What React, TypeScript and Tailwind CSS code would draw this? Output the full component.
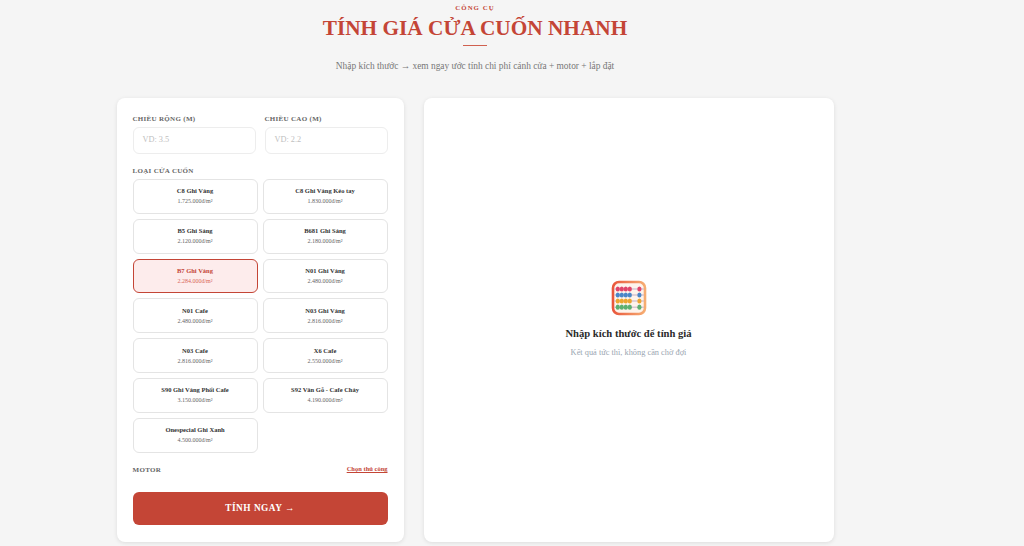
const doors: [string, string][] = [
  ["C8 Ghi Vàng", "1.725.000đ/m²"],
  ["C8 Ghi Vàng Kéo tay", "1.830.000đ/m²"],
  ["B5 Ghi Sáng", "2.120.000đ/m²"],
  ["B681 Ghi Sáng", "2.180.000đ/m²"],
  ["B7 Ghi Vàng", "2.284.000đ/m²"],
  ["N01 Ghi Vàng", "2.480.000đ/m²"],
  ["N01 Cafe", "2.480.000đ/m²"],
  ["N03 Ghi Vàng", "2.816.000đ/m²"],
  ["N03 Cafe", "2.816.000đ/m²"],
  ["X6 Cafe", "2.550.000đ/m²"],
  ["S90 Ghi Vàng Phối Cafe", "3.150.000đ/m²"],
  ["S92 Vân Gỗ - Cafe Cháy", "4.190.000đ/m²"],
  ["Onespecial Ghi Xanh", "4.500.000đ/m²"],
];

function Abacus() {
  const rows = [
    { y: 9, c: "#e0446a" },
    { y: 15, c: "#4a86c8" },
    { y: 21, c: "#eda52f" },
    { y: 27.2, c: "#5cb070" },
  ];
  return (
    <svg width="36" height="36" viewBox="0 0 36 36" aria-hidden="true">
      <defs>
        <linearGradient id="frame" x1="0" y1="0" x2="1" y2="0">
          <stop offset="0" stopColor="#e9573c" />
          <stop offset="1" stopColor="#f6ad72" />
        </linearGradient>
      </defs>
      <rect x="2" y="2" width="32" height="32" rx="6" fill="#fdf3ec" stroke="url(#frame)" strokeWidth="2.6" />
      {rows.map((r) => (
        <g key={r.y}>
          <rect x="3" y={r.y - 0.6} width="30" height="1.2" fill="#cdbccb" />
          {[6.8, 10.8, 14.8, 18.8, 28.4].map((x) => (
            <ellipse key={x} cx={x} cy={r.y} rx="2.1" ry="2.6" fill={r.c} />
          ))}
        </g>
      ))}
    </svg>
  );
}

export default function App() {
  return (
    <div className="h-[546px] overflow-hidden bg-[#f5f5f5] font-['Liberation_Serif',serif]">
      <div className="w-[950px] flex flex-col items-center">
        <p className="mt-[3px] text-[6.8px] leading-[9px] font-bold tracking-[1.05px] text-[#c44536]">CÔNG CỤ</p>
        <h1 className="mt-[3px] text-[21.3px] leading-[27px] font-bold text-[#c44536]">TÍNH GIÁ CỬA CUỐN NHANH</h1>
        <div className="mt-[3px] w-6 h-[1px] bg-[#d0604f]" />
        <p className="mt-[14px] text-[9.4px] leading-[12px] text-[#777777]">
          Nhập kích thước → xem ngay ước tính chi phí cánh cửa + motor + lắp đặt
        </p>

        <div className="mt-[26px] w-[717px] flex gap-5 items-stretch">
          <div className="w-[287px] h-[444px] shrink-0 bg-white rounded-lg shadow-[0_1px_4px_rgba(0,0,0,0.1)] px-4 pt-4">
            <div className="flex gap-[9px]">
              {[["CHIỀU RỘNG (M)", "VD: 3.5"], ["CHIỀU CAO (M)", "VD: 2.2"]].map(([label, ph]) => (
                <div key={label} className="w-[123px]">
                  <p className="text-[7px] leading-[10px] font-bold tracking-[0.3px] text-[#666666]">{label}</p>
                  <div className="mt-[3px] h-[27px] border border-[#ededed] rounded-md px-[9px] flex items-center text-[8.3px] text-[#c0c0c0]">
                    {ph}
                  </div>
                </div>
              ))}
            </div>
            <p className="mt-[12px] text-[7px] leading-[10px] font-bold tracking-[0.3px] text-[#666666]">LOẠI CỬA CUỐN</p>
            <div className="mt-[3px] grid grid-cols-2 gap-x-[5px] gap-y-[5px] w-[255px]">
              {doors.map(([name, price], i) => {
                const active = i === 4;
                return (
                  <div
                    key={name}
                    className={
                      active
                        ? "h-[34.8px] rounded-md border-[1.5px] border-[#c44536] bg-[#fdecec] flex flex-col items-center justify-center pb-[1px]"
                        : "h-[34.8px] rounded-md border-[1.5px] border-[#e4e4e4] bg-white flex flex-col items-center justify-center pb-[1px]"
                    }
                  >
                    <p className={active ? "text-[6.5px] leading-[9px] font-bold text-[#c44536]" : "text-[6.5px] leading-[9px] font-bold text-[#333333]"}>{name}</p>
                    <p className={active ? "mt-[2px] text-[6px] leading-[8px] text-[#d9675a]" : "mt-[2px] text-[6px] leading-[8px] text-[#666666]"}>{price}</p>
                  </div>
                );
              })}
            </div>
            <div className="mt-[11.4px] w-[255px] flex items-center justify-between">
              <span className="text-[7px] leading-[10px] font-bold tracking-[0.3px] text-[#666666]">MOTOR</span>
              <span className="mb-[3px] text-[6.5px] leading-[10px] font-bold underline text-[#c44536]">Chọn thủ công</span>
            </div>
            <div className="mt-[15px] w-[255px] h-[33px] pt-[1px] rounded-md bg-[#c44536] flex items-center justify-center text-white text-[9.3px] font-bold tracking-[0.5px]">
              TÍNH NGAY →
            </div>
          </div>

          <div className="flex-1 h-[444px] bg-white rounded-lg shadow-[0_1px_4px_rgba(0,0,0,0.1)] flex flex-col items-center pt-[182px]">
            <Abacus />
            <p className="mt-[11px] text-[10.6px] leading-[14px] font-bold text-[#2b2b2b]">Nhập kích thước để tính giá</p>
            <p className="mt-[6px] text-[8.35px] leading-[11px] text-[#9aa5b1]">Kết quả tức thì, không cần chờ đợi</p>
          </div>
        </div>
      </div>
    </div>
  );
}
